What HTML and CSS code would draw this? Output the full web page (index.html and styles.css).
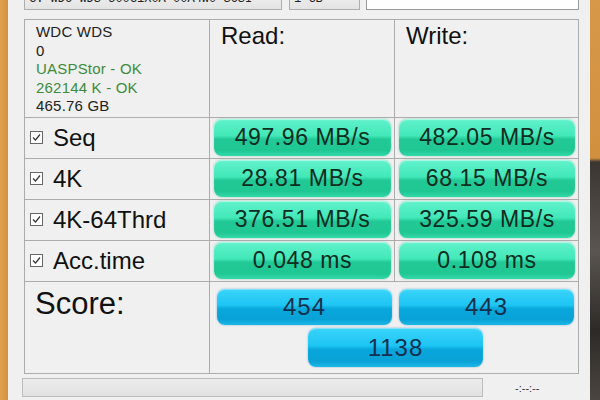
FILE: index.html
```html
<!DOCTYPE html>
<html lang="en">
<head>
  <meta charset="UTF-8">
  <meta name="viewport" content="width=device-width, initial-scale=1.0">
  <title>AS SSD Benchmark</title>
  <link rel="stylesheet" href="styles.css">
</head>
<body>
  <div class="frame-left"></div>

  <main class="app">
    <div class="toolbar">
      <div class="dropdown drive">G: WDC  WDS 500G1X0A 00A4W0 SCSI <span class="arrow">&#8964;</span></div>
      <div class="dropdown size">1 GB <span class="arrow">&#8964;</span></div>
      <div class="textbox"></div>
    </div>

    <div class="results">
      <div class="cell info">
        <div>WDC WDS</div>
        <div>0</div>
        <div class="ok">UASPStor - OK</div>
        <div class="ok">262144 K - OK</div>
        <div>465.76 GB</div>
      </div>
      <div class="cell head">Read:</div>
      <div class="cell head">Write:</div>

      <div class="cell label">
        <svg class="check" width="13" height="13" viewBox="0 0 13 13"><rect x="0.5" y="0.5" width="12" height="12" fill="#fff" stroke="#666"/><path d="M3 6.5 L5.5 9 L10 3.5" fill="none" stroke="#333" stroke-width="1.2"/></svg>
        <span>Seq</span>
      </div>
      <div class="cell"><div class="pill">497.96 MB/s</div></div>
      <div class="cell"><div class="pill">482.05 MB/s</div></div>

      <div class="cell label">
        <svg class="check" width="13" height="13" viewBox="0 0 13 13"><rect x="0.5" y="0.5" width="12" height="12" fill="#fff" stroke="#666"/><path d="M3 6.5 L5.5 9 L10 3.5" fill="none" stroke="#333" stroke-width="1.2"/></svg>
        <span>4K</span>
      </div>
      <div class="cell"><div class="pill">28.81 MB/s</div></div>
      <div class="cell"><div class="pill">68.15 MB/s</div></div>

      <div class="cell label">
        <svg class="check" width="13" height="13" viewBox="0 0 13 13"><rect x="0.5" y="0.5" width="12" height="12" fill="#fff" stroke="#666"/><path d="M3 6.5 L5.5 9 L10 3.5" fill="none" stroke="#333" stroke-width="1.2"/></svg>
        <span>4K-64Thrd</span>
      </div>
      <div class="cell"><div class="pill">376.51 MB/s</div></div>
      <div class="cell"><div class="pill">325.59 MB/s</div></div>

      <div class="cell label">
        <svg class="check" width="13" height="13" viewBox="0 0 13 13"><rect x="0.5" y="0.5" width="12" height="12" fill="#fff" stroke="#666"/><path d="M3 6.5 L5.5 9 L10 3.5" fill="none" stroke="#333" stroke-width="1.2"/></svg>
        <span>Acc.time</span>
      </div>
      <div class="cell"><div class="pill">0.048 ms</div></div>
      <div class="cell"><div class="pill">0.108 ms</div></div>

      <div class="cell score-label">Score:</div>
      <div class="cell scores">
        <div class="pill blue">454</div>
        <div class="pill blue">443</div>
        <div class="pill blue total">1138</div>
      </div>
    </div>

    <div class="status">
      <div class="progress"></div>
      <span class="time">-:--:--</span>
    </div>
  </main>

  <div class="frame-right"></div>
</body>
</html>
```

FILE: styles.css
```css
body {
  font-family: 'Liberation Sans', Arial, sans-serif;
  margin: 0;
  width: 600px;
  height: 400px;
  overflow: hidden;
  display: flex;
  background-color: #f0f0f0; /* Window gray */
  color: #111;
}

/* Desktop showing behind the window */
.frame-left {
  width: 8px;
  flex-shrink: 0;
  background: linear-gradient(to right, #e0a24e, #d4913c);
}

.frame-right {
  width: 10px;
  flex-shrink: 0;
  background: linear-gradient(to bottom, #d8984a 0, #d0903e 158px, #3b3632 162px, #5a5550 250px, #2e2a27 330px, #4a4540 400px);
}

.app {
  flex: 1;
  padding-left: 16px;
  display: flex;
  flex-direction: column;
}

.toolbar {
  display: flex;
  height: 21px;
  margin-top: -11px;
}

.dropdown {
  box-sizing: border-box;
  border: 1px solid #adadad;
  background: linear-gradient(#f2f2f2, #e3e3e3);
  font-family: 'Liberation Mono', monospace;
  font-size: 12px;
  line-height: 19px;
  padding-left: 4px;
  color: #222;
  position: relative;
  white-space: nowrap;
  overflow: hidden;
}

.dropdown .arrow {
  position: absolute;
  right: 6px;
  top: -4px;
  color: #666;
}

.drive {
  width: 258px;
}

.size {
  width: 71px;
  margin-left: 7px;
}

.textbox {
  width: 213px;
  margin-left: 6px;
  box-sizing: border-box;
  border: 1px solid #9a9a9a;
  background-color: #fff;
}

.results {
  margin-top: 9px;
  width: 555px;
  box-sizing: border-box;
  display: grid;
  grid-template-columns: 184px 184px 183px;
  grid-template-rows: 97px 40px 40px 40px 40px 91px;
  gap: 1px;
  border: 1px solid #acacac;
  background-color: #acacac; /* Shows through as grid lines */
}

.cell {
  background-color: #f0f0f0;
  padding: 1px 3px 2px 4px;
  box-sizing: border-box;
}

.info {
  padding: 3px 0 0 11px;
  font-size: 15px;
  line-height: 18.5px;
  letter-spacing: 0.2px;
  color: #222;
}

.info .ok {
  color: #3d8b3d;
}

.head {
  padding: 2px 0 0 11px;
  font-size: 24px;
  line-height: 28px;
}

.label {
  display: flex;
  align-items: center;
  padding-left: 5px;
  font-size: 24px;
}

.label .check {
  margin-right: 10px;
}

.pill {
  height: 37px;
  border-radius: 8px;
  display: flex;
  align-items: center;
  justify-content: center;
  font-size: 23px;
  letter-spacing: 0.6px;
  color: #0e2c20;
  background: linear-gradient(#62f2cc 0%, #42e8b8 45%, #22c996 55%, #1fc793 85%, #34d9a8 100%);
  box-shadow: 0 0 2px rgba(20, 160, 110, 0.5), inset 0 1px 1px rgba(255, 255, 255, 0.5);
}

.score-label {
  padding: 4px 0 0 10px;
  font-size: 31px;
  line-height: 36px;
}

.scores {
  grid-column: span 2;
  display: grid;
  grid-template-columns: 175px 175px;
  column-gap: 7px;
  row-gap: 3px;
  padding: 7px 0 0 7px;
  align-content: start;
}

.pill.blue {
  height: 36px;
  font-size: 24px;
  letter-spacing: 1px;
  color: #13304e;
  background: linear-gradient(#3ad4fa 0%, #1ec5f3 45%, #08a7dc 55%, #0aa2d6 85%, #1bb7e8 100%);
  box-shadow: 0 0 2px rgba(0, 120, 180, 0.5), inset 0 1px 1px rgba(255, 255, 255, 0.4);
}

.pill.total {
  grid-column: span 2;
  justify-self: center;
  width: 175px;
  height: 39px;
}

.status {
  display: flex;
  align-items: center;
  margin-top: 4px;
  margin-left: -2px;
}

.progress {
  width: 461px;
  height: 19px;
  box-sizing: border-box;
  border: 1px solid #bcbcbc;
  background: linear-gradient(#ececec, #e2e2e2);
}

.time {
  margin-left: 32px;
  font-size: 11px;
  color: #333;
}
```
